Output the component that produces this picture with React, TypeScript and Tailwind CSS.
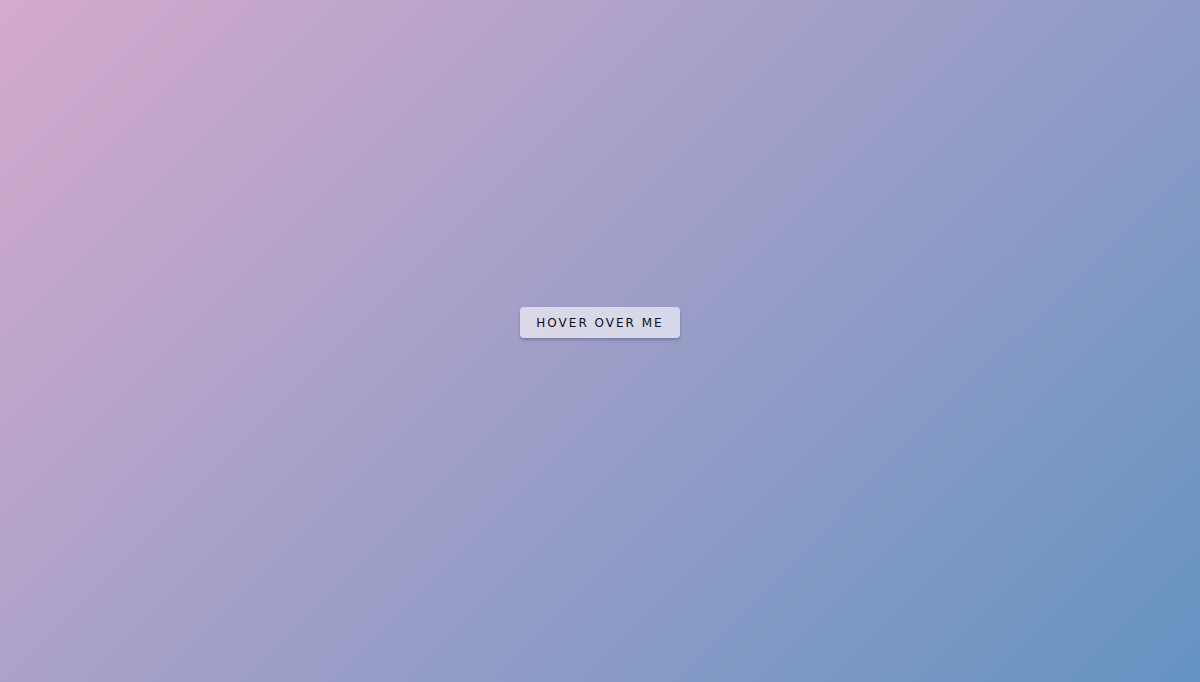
export default function App() {
  return (
    <div className="flex h-[682px] w-full items-center justify-center bg-[linear-gradient(135deg,#d5aacd,#6593c2)] pb-[37px]">
      <button className="h-[31px] rounded-[4px] bg-white/60 px-4 text-[12px] leading-[16px] tracking-[2px] text-[#111118] shadow-[0_2px_3px_rgba(60,60,110,0.35)] font-['DejaVu_Sans',sans-serif]">
        HOVER OVER ME
      </button>
    </div>
  );
}
